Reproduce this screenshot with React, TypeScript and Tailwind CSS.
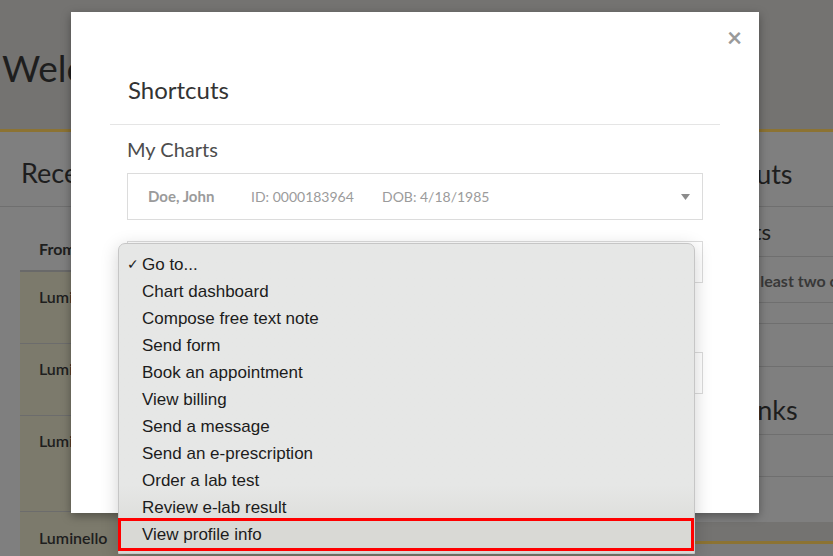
import React from 'react';

const menuItems = [
  'Chart dashboard',
  'Compose free text note',
  'Send form',
  'Book an appointment',
  'View billing',
  'Send a message',
  'Send an e-prescription',
  'Order a lab test',
  'Review e-lab result',
];

const Caret: React.FC = () => (
  <svg width="9" height="6" viewBox="0 0 9 6">
    <path d="M0 0h9L4.5 6z" fill="#8c8c8c" />
  </svg>
);

const App: React.FC = () => {
  return (
    <div
      className="relative w-[833px] h-[556px] overflow-hidden bg-[#747371] text-[#1e1e1e]"
      style={{ fontFamily: 'Lato, "Open Sans", sans-serif' }}
    >
      {/* page behind the dim overlay */}
      <div className="h-[129px] pl-[2px] pt-[46px] text-[37px] leading-[44px] whitespace-nowrap">Welcome back, Dr. Smith</div>

      <div className="flex gap-[20px]">
        {/* left card */}
        <div className="w-[640px] h-[440px] shrink-0 bg-[#7f7f7f] border-t-[3px] border-[#8c7333]">
          <div className="h-[75px] px-[21px] pt-[25px] text-[27px] leading-[32px] border-b border-[#6f6f6f] whitespace-nowrap">Recent Messages</div>
          <div className="px-[20px] pt-[20px]">
            <div className="h-[45px] pl-[19px] flex items-center font-bold text-[16px] border-b-2 border-[#696969]">From</div>
            <div className="h-[72px] pl-[19px] pt-[13px] bg-[#7c7a6c] border-b border-[#6c6c6c] font-semibold text-[16px]">Luminello Support</div>
            <div className="h-[72px] pl-[19px] pt-[13px] bg-[#7c7a6c] border-b border-[#6c6c6c] font-semibold text-[16px]">Luminello Support</div>
            <div className="h-[96px] pl-[19px] pt-[13px] bg-[#7c7a6c] border-b border-[#6c6c6c] font-semibold text-[16px]">Luminello Support</div>
            <div className="h-[80px] pl-[19px] pt-[14px] bg-[#7c7a6c] font-semibold text-[16px] flex">
              <span className="w-[211px]">Luminello</span>
              <span className="pt-[31px] font-bold">Patient/Client Request</span>
            </div>
          </div>
        </div>

        {/* right column */}
        <div className="flex-1 flex flex-col">
          <div className="h-[393px] bg-[#7f7f7f] border-t-[3px] border-[#8c7333] whitespace-nowrap">
            <div className="h-[75px] pl-[19px] pt-[26px] text-[27px] leading-[32px] border-b border-[#6f6f6f]">Shortcuts</div>
            <div className="h-[50px] pl-[11px] pt-[12px] text-[22px] leading-[26px] border-b border-[#6f6f6f]">My Charts</div>
            <div className="h-[46px] pl-[35px] pt-[12px] text-[16px] font-bold text-[#383838] border-b border-[#6f6f6f]">Select at least two charts</div>
            <div className="h-[21px] border-b border-[#6f6f6f]"></div>
            <div className="h-[43px] border-b border-[#6f6f6f]"></div>
            <div className="h-[68px] pt-[27px] text-[27px] leading-[32px] border-b border-[#6f6f6f]">
              <span className="-ml-[6px]">Useful Links</span>
            </div>
            <div className="h-[42px] border-b border-[#6f6f6f]"></div>
          </div>
          <div className="mt-[19px] h-[40px] bg-[#7b7b7b] border-t-[3px] border-[#8c7333]"></div>
        </div>
      </div>

      {/* modal */}
      <div className="absolute left-[71px] top-[12px] w-[688px] h-[501px] bg-white shadow-[0_3px_9px_rgba(0,0,0,0.35)]">
        <div className="relative px-[39px]">
          <button className="absolute right-[17px] top-[12px] text-[26px] leading-[26px] font-bold text-[#9a9a9a]">×</button>
          <div className="pt-[64px] pb-[20px] px-[18px] border-b border-[#e5e5e5] text-[24px] leading-[28px] text-[#333]">Shortcuts</div>
          <div className="px-[17px]">
            <div className="mt-[12px] text-[20px] leading-[24px] text-[#4d4d4d]">My Charts</div>
            <div className="mt-[12px] h-[47px] border border-[#dcdcdc] flex items-center pl-[20px] pr-[12px] text-[14px] text-[#9b9b9b]">
              <span className="w-[103px] font-bold text-[15px]">Doe, John</span>
              <span className="w-[131px]">ID: 0000183964</span>
              <span className="flex-1">DOB: 4/18/1985</span>
              <Caret />
            </div>
            <div className="mt-[21px] h-[42px] border border-[#dcdcdc] flex items-center justify-end pr-[8px]">
              <span className="w-[2px] h-[2px] bg-black"></span>
            </div>
            <div className="mt-[69px] h-[42px] border border-[#dcdcdc] flex items-center justify-end pr-[8px]">
              <span className="w-[2px] h-[2px] bg-black"></span>
            </div>
          </div>
        </div>
      </div>

      {/* native select popup */}
      <div
        className="absolute left-[118px] top-[243px] w-[577px] pt-[7px] pb-[2px] rounded-t-[7px] border border-[#c6c6c6] bg-linear-to-b from-[#e6e7e6] from-[78%] to-[#d6d6d2] shadow-[0_4px_18px_rgba(0,0,0,0.18)] text-[17px] text-[#1c1c1c]"
        style={{ fontFamily: '"Liberation Sans", Arial, sans-serif' }}
      >
        <div className="relative h-[27px] leading-[27px] pl-[23px]">
          <span className="absolute left-[8px] top-0 text-[14px]">✓</span>
          Go to...
        </div>
        {menuItems.map((item) => (
          <div key={item} className="h-[27px] leading-[27px] pl-[23px]">
            {item}
          </div>
        ))}
        <div className="-mt-[3px] -ml-px w-[576px] h-[33px] border-[3px] border-[#ff0000] bg-[#d9d9d5] leading-[27px] pl-[21px]">
          View profile info
        </div>
      </div>
    </div>
  );
};

export default App;
